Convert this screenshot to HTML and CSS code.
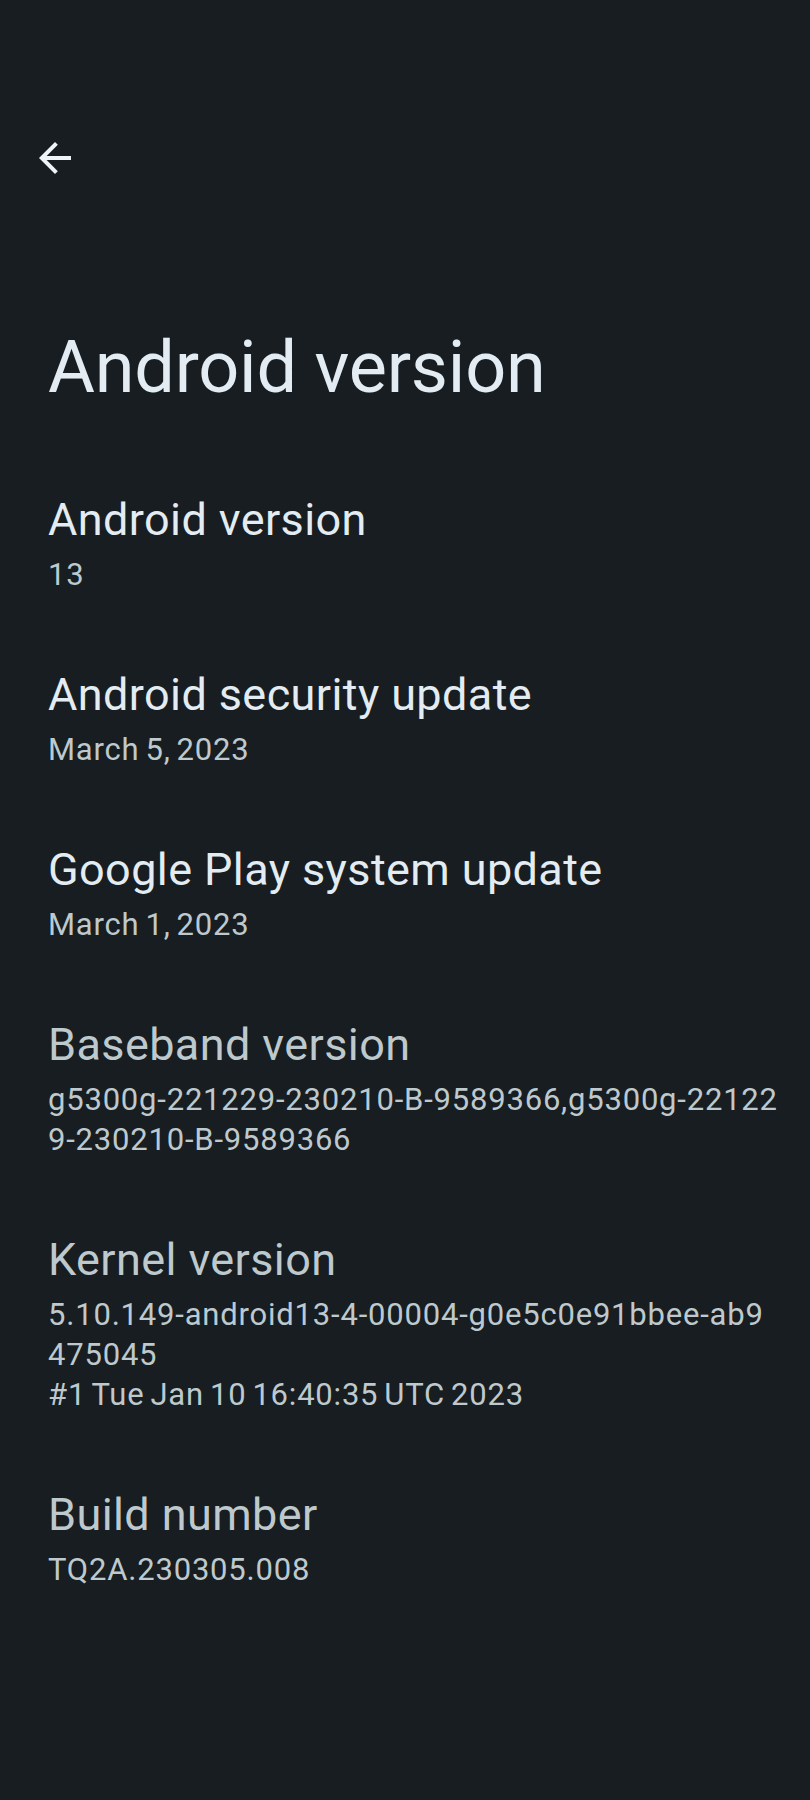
FILE: index.html
```html
<!DOCTYPE html>
<html lang="en">
<head>
<meta charset="utf-8">
<title>Android version</title>
<link rel="stylesheet" href="styles.css">
</head>
<body>
<div class="screen">
  <header class="appbar">
    <button class="back" aria-label="Navigate up">
      <svg viewBox="0 0 24 24" width="48" height="48"><path d="M20 11H7.83l5.59-5.59L12 4l-8 8 8 8 1.41-1.41L7.83 13H20v-2z" fill="currentColor"/></svg>
    </button>
    <h1 class="page-title">Android version</h1>
  </header>
  <main class="prefs">
    <div class="pref">
      <div class="pref-title">Android version</div>
      <div class="pref-summary">13</div>
    </div>
    <div class="pref">
      <div class="pref-title">Android security update</div>
      <div class="pref-summary">March 5, 2023</div>
    </div>
    <div class="pref">
      <div class="pref-title">Google Play system update</div>
      <div class="pref-summary">March 1, 2023</div>
    </div>
    <div class="pref muted">
      <div class="pref-title">Baseband version</div>
      <div class="pref-summary">g5300g-221229-230210-B-9589366,g5300g-22122
9-230210-B-9589366</div>
    </div>
    <div class="pref muted">
      <div class="pref-title">Kernel version</div>
      <div class="pref-summary">5.10.149-android13-4-00004-g0e5c0e91bbee-ab9
475045
#1 Tue Jan 10 16:40:35 UTC 2023</div>
    </div>
    <div class="pref muted">
      <div class="pref-title">Build number</div>
      <div class="pref-summary">TQ2A.230305.008</div>
    </div>
  </main>
</div>
</body>
</html>
```

FILE: styles.css
```css
html, body {
  margin: 0;
  padding: 0;
  background: #171d20;
}

body {
  font-family: Roboto, "Liberation Sans", sans-serif;
  color: #e2ebf0;
  min-height: 1800px;
}

.screen {
  width: 810px;
}

.appbar {
  display: flex;
  flex-direction: column;
  align-items: flex-start;
  padding-top: 134px;
}

.back {
  margin-left: 31px;
  width: 48px;
  height: 48px;
  padding: 0;
  border: 0;
  background: transparent;
  color: #eef4f7;
  display: flex;
}

.page-title {
  margin: 142px 0 0 48px;
  font-size: 72px;
  line-height: 88px;
  font-weight: 400;
  letter-spacing: -0.2px;
  color: #e3ecf2;
}

.prefs {
  display: flex;
  flex-direction: column;
  margin-top: 45px;
}

.pref {
  padding: 35px 24px 37px 48px;
}

.pref-title {
  font-size: 45px;
  line-height: 56px;
  letter-spacing: 0.4px;
  color: #e3ecf2;
}

.pref-summary {
  margin-top: 7px;
  font-size: 31px;
  line-height: 40px;
  letter-spacing: 0.8px;
  word-spacing: -2.5px;
  color: #bec9ce;
  white-space: pre-line;
}

.muted .pref-title {
  color: #bec9ce;
}
```
